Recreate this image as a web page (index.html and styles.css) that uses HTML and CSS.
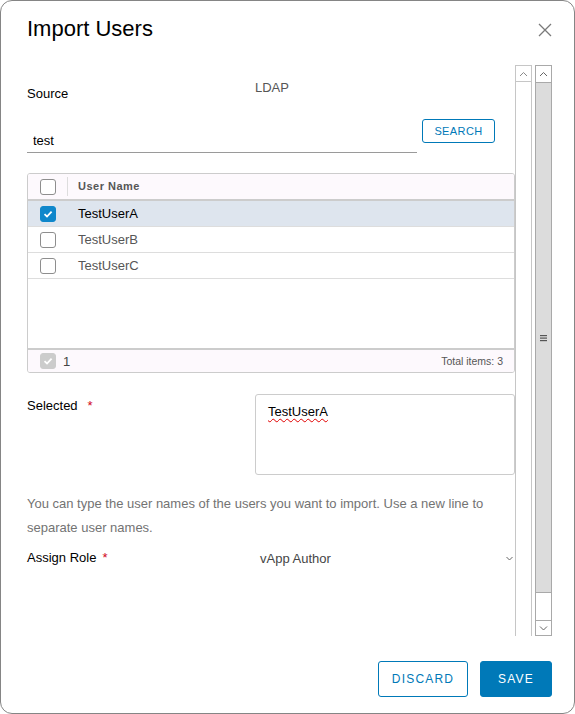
FILE: index.html
```html
<!DOCTYPE html>
<html lang="en">
<head>
<meta charset="utf-8">
<title>Import Users</title>
<link rel="stylesheet" href="styles.css">
</head>
<body>
<div class="modal">
  <header class="modal-header">
    <h3 class="modal-title">Import Users</h3>
    <button class="close" aria-label="Close"><svg width="14" height="14" viewBox="0 0 14 14"><path d="M1 1L13 13M13 1L1 13" stroke="#7a7a7a" stroke-width="1.3" fill="none"/></svg></button>
  </header>
  <div class="modal-body">
    <div class="content">
      <div class="form-row source-row">
        <div class="label">Source</div>
        <div class="value">LDAP</div>
      </div>
      <div class="search-row">
        <input class="search-input" type="text" value="test">
        <button class="btn btn-sm">SEARCH</button>
      </div>
      <div class="grid">
        <div class="grid-head">
          <div class="cell-check"><span class="checkbox"></span></div>
          <div class="col-title">User Name</div>
        </div>
        <div class="grid-body">
          <div class="grid-row selected">
            <div class="cell-check"><span class="checkbox checked"><svg width="10" height="8" viewBox="0 0 10 8"><path d="M1.5 4.2L4 6.5L8.6 1.6" stroke="#fff" stroke-width="1.8" fill="none"/></svg></span></div>
            <div class="row-name">TestUserA</div>
          </div>
          <div class="grid-row">
            <div class="cell-check"><span class="checkbox"></span></div>
            <div class="row-name">TestUserB</div>
          </div>
          <div class="grid-row">
            <div class="cell-check"><span class="checkbox"></span></div>
            <div class="row-name">TestUserC</div>
          </div>
        </div>
        <div class="grid-foot">
          <div class="cell-check"><span class="checkbox disabled"><svg width="10" height="8" viewBox="0 0 10 8"><path d="M1.5 4.2L4 6.5L8.6 1.6" stroke="#fff" stroke-width="1.8" fill="none"/></svg></span></div>
          <div class="foot-count">1</div>
          <div class="foot-total">Total items: 3</div>
        </div>
      </div>
      <div class="form-row selected-row">
        <div class="label">Selected<span class="req">*</span></div>
        <div class="textarea"><span class="misspelled">TestUserA</span></div>
      </div>
      <p class="help">You can type the user names of the users you want to import. Use a new line to separate user names.</p>
      <div class="form-row role-row">
        <div class="label">Assign Role<span class="req req-role">*</span></div>
        <div class="select"><span>vApp Author</span><svg width="7" height="5" viewBox="0 0 7 5"><path d="M0.5 1L3.5 4L6.5 1" stroke="#666" stroke-width="1" fill="none"/></svg></div>
      </div>
    </div>
    <div class="scroll inner-scroll">
      <div class="sb-btn sb-up"><svg width="9" height="6" viewBox="0 0 9 6"><path d="M1 5L4.5 1.5L8 5" stroke="#8a8a8a" stroke-width="1" fill="none"/></svg></div>
    </div>
    <div class="scroll outer-scroll">
      <div class="sb-btn sb-up"><svg width="9" height="6" viewBox="0 0 9 6"><path d="M1 5L4.5 1.5L8 5" stroke="#666" stroke-width="1" fill="none"/></svg></div>
      <div class="sb-thumb"><svg width="7" height="8" viewBox="0 0 7 8"><rect x="0" y="1" width="7" height="1.2" fill="#555"/><rect x="0" y="3.5" width="7" height="1.2" fill="#555"/><rect x="0" y="6" width="7" height="1.2" fill="#555"/></svg></div>
      <div class="sb-track"></div>
      <div class="sb-btn sb-down"><svg width="9" height="6" viewBox="0 0 9 6"><path d="M1 1.5L4.5 5L8 1.5" stroke="#666" stroke-width="1" fill="none"/></svg></div>
    </div>
  </div>
  <footer class="modal-footer">
    <button class="btn btn-lg btn-discard">DISCARD</button>
    <button class="btn btn-lg btn-save">SAVE</button>
  </footer>
</div>
</body>
</html>
```
FILE: styles.css
```css
* { box-sizing: border-box; }
html, body { margin: 0; padding: 0; background: #fff; }
body {
  font-family: "Liberation Sans", Arial, sans-serif;
  font-size: 13px;
  color: #000;
  width: 575px;
  height: 714px;
  overflow: hidden;
}
.modal {
  width: 575px;
  height: 714px;
  border: 1px solid #858585;
  border-radius: 12px;
  display: flex;
  flex-direction: column;
  background: #fff;
}
.modal-header {
  height: 64px;
  flex: none;
  display: flex;
  justify-content: space-between;
  align-items: flex-start;
  padding: 15px 22px 0 26px;
}
.modal-title {
  margin: 0;
  font-size: 22px;
  line-height: 26px;
  font-weight: normal;
  color: #000;
}
.close {
  margin-top: 7px;
  width: 14px;
  height: 14px;
  padding: 0;
  border: 0;
  background: none;
  display: block;
}
.close svg { display: block; }

.modal-body {
  height: 571px;
  flex: none;
  display: flex;
  padding: 0 22px 0 26px;
}
.content { width: 488px; flex: none; }

.scroll { width: 17px; flex: none; display: flex; flex-direction: column; }
.inner-scroll { border-left: 1px solid #c6c6c6; border-right: 1px solid #c6c6c6; }
.inner-scroll .sb-up { height: 17px; border-top: 1px solid #c6c6c6; border-bottom: 1px solid #c6c6c6; }
.outer-scroll { margin-left: 3px; border: 1px solid #a9a9a9; }
.sb-btn { display: flex; align-items: center; justify-content: center; background: #fff; flex: none; }
.outer-scroll .sb-up { height: 17px; border-bottom: 1px solid #a9a9a9; }
.sb-thumb {
  height: 510px;
  flex: none;
  background: #dcdcdc;
  border-bottom: 1px solid #a9a9a9;
  display: flex;
  align-items: center;
  justify-content: center;
}
.sb-track { flex: 1; }
.outer-scroll .sb-down { height: 15px; border-top: 1px solid #a9a9a9; }

.form-row { display: flex; align-items: flex-start; }
.label { width: 228px; flex: none; line-height: 16px; color: #000; }
.source-row { margin-top: 15px; }
.source-row .label { padding-top: 6px; }
.value { color: #565656; line-height: 16px; }

.search-row { display: flex; align-items: flex-start; margin-top: 17px; }
.search-input {
  width: 390px;
  height: 24px;
  margin: 10px 0 0;
  border: 0;
  border-bottom: 1px solid #9a9a9a;
  padding: 0 6px;
  font: 13px "Liberation Sans", Arial, sans-serif;
  color: #000;
  outline: none;
  background: transparent;
}
.btn {
  font-family: "Liberation Sans", Arial, sans-serif;
  border: 1px solid #0079b8;
  border-radius: 3px;
  background: #fff;
  color: #0079b8;
  padding: 0;
  cursor: pointer;
}
.btn-sm {
  width: 73px;
  height: 24px;
  margin-left: 5px;
  font-size: 11px;
  letter-spacing: 0.4px;
}

.grid {
  margin-top: 20px;
  border: 1px solid #ccc;
  border-radius: 3px;
  overflow: hidden;
}
.grid-head {
  height: 27px;
  border-bottom: 2px solid #ccc;
  background: #fdf9fd;
  display: flex;
  align-items: center;
}
.cell-check { width: 40px; flex: none; padding-left: 12px; display: flex; align-items: center; }
.grid-head .cell-check { width: 39px; }
.grid-foot .cell-check { width: auto; }
.col-title {
  border-left: 1px solid #ddd;
  height: 19px;
  line-height: 19px;
  padding-left: 10px;
  font-size: 11px;
  font-weight: bold;
  color: #565656;
  letter-spacing: 0.5px;
}
.grid-body { height: 147px; }
.grid-row {
  height: 26px;
  border-bottom: 1px solid #ddd;
  display: flex;
  align-items: center;
  color: #565656;
}
.grid-row.selected { background: #dee5ee; color: #000; }
.row-name { padding-left: 10px; }
.grid-foot {
  height: 24px;
  border-top: 2px solid #ccc;
  background: #fdf9fd;
  display: flex;
  align-items: center;
  padding-right: 11px;
}
.foot-count { margin-left: 7px; color: #454545; }
.foot-total { margin-left: auto; font-size: 10.5px; color: #565656; }

.checkbox {
  width: 16px;
  height: 16px;
  border: 1px solid #8e8e8e;
  border-radius: 3px;
  background: #fff;
  display: flex;
  align-items: center;
  justify-content: center;
}
.checkbox.checked { background: #0f87cb; border-color: #0f87cb; }
.checkbox.disabled { background: #ccc; border-color: #ccc; }

.selected-row { margin-top: 21px; }
.selected-row .label { padding-top: 4px; line-height: 15px; }
.req { color: #d0021b; margin-left: 10px; }
.req-role { margin-left: 6px; }
.textarea {
  width: 260px;
  height: 81px;
  border: 1px solid #ccc;
  border-radius: 3px;
  padding: 9px 12px;
  line-height: 16px;
  color: #000;
}
.misspelled {
  text-decoration: underline wavy #e00000;
  text-decoration-thickness: 1px;
  text-underline-offset: 2px;
}
.help { margin: 17px 0 0; line-height: 24px; color: #737373; }
.role-row { margin-top: 6px; }
.role-row .label { line-height: 24px; }
.select {
  width: 260px;
  height: 24px;
  display: flex;
  justify-content: space-between;
  align-items: center;
  padding: 0 2px 0 5px;
  color: #454545;
}

.modal-footer {
  flex: 1;
  display: flex;
  justify-content: flex-end;
  align-items: flex-start;
  gap: 12px;
  padding: 25px 22px 0 0;
}
.btn-lg { height: 36px; font-size: 12px; letter-spacing: 1.2px; }
.btn-discard { width: 90px; }
.btn-save { width: 72px; background: #0079b8; color: #fff; }
```
